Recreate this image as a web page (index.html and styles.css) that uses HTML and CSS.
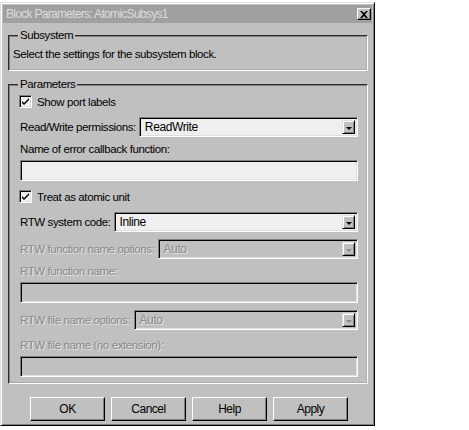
FILE: index.html
```html
<!DOCTYPE html>
<html lang="en">
<head>
    <meta charset="UTF-8">
    <title>Block Parameters: AtomicSubsys1</title>
    <link rel="stylesheet" href="styles.css">
</head>
<body>
    <div class="window">
        <div class="titlebar">
            <span class="title">Block Parameters: AtomicSubsys1</span>
            <span class="close">
                <svg width="8" height="7" viewBox="0 0 8 7"><path d="M0 0h2l2 2 2-2h2L5 3.5 8 7H6L4 5 2 7H0l3-3.5z" fill="#000"/></svg>
            </span>
        </div>

        <div class="client">
            <fieldset class="group subsystem">
                <legend>Subsystem</legend>
                <p class="desc">Select the settings for the subsystem block.</p>
            </fieldset>

            <fieldset class="group params">
                <legend>Parameters</legend>

                <label class="check first">
                    <span class="box"><svg width="9" height="9" viewBox="0 0 9 9"><path d="M1 4l2 2 5-5v2l-5 5-2-2z" fill="#000"/></svg></span>
                    Show port labels
                </label>

                <div class="field-row">
                    <span class="label">Read/Write permissions:</span>
                    <div class="select"><span class="value">ReadWrite</span><span class="arrow"></span></div>
                </div>

                <div class="label line">Name of error callback function:</div>
                <div class="edit"></div>

                <label class="check">
                    <span class="box"><svg width="9" height="9" viewBox="0 0 9 9"><path d="M1 4l2 2 5-5v2l-5 5-2-2z" fill="#000"/></svg></span>
                    Treat as atomic unit
                </label>

                <div class="field-row">
                    <span class="label">RTW system code:</span>
                    <div class="select"><span class="value">Inline</span><span class="arrow"></span></div>
                </div>

                <div class="field-row disabled">
                    <span class="label">RTW function name options:</span>
                    <div class="select"><span class="value">Auto</span><span class="arrow"></span></div>
                </div>

                <div class="label line disabled">RTW function name:</div>
                <div class="edit disabled"></div>

                <div class="field-row disabled">
                    <span class="label">RTW file name options:</span>
                    <div class="select"><span class="value">Auto</span><span class="arrow"></span></div>
                </div>

                <div class="label line late disabled">RTW file name (no extension):</div>
                <div class="edit disabled"></div>
            </fieldset>

            <div class="buttons">
                <button class="btn">OK</button>
                <button class="btn">Cancel</button>
                <button class="btn">Help</button>
                <button class="btn">Apply</button>
            </div>
        </div>
    </div>
</body>
</html>
```

FILE: styles.css
```css
html, body {
    margin: 0;
    background-color: #ffffff;
    font-family: "Liberation Sans", Arial, sans-serif;
    font-size: 11.5px;
    letter-spacing: -0.4px;
}

.window {
    margin-top: 2px;
    width: 375px;
    height: 424px;
    box-sizing: border-box;
    background-color: #c0c0c0;
    border: 1px solid;
    border-color: #dfdfdf #000 #000 #dfdfdf;
    box-shadow: inset 1px 1px 0 #fff, inset -1px -1px 0 #808080;
    padding: 2px;
    display: flex;
    flex-direction: column;
}

.titlebar {
    height: 18px;
    background-color: #a0a0a0;
    color: #dcdcdc;
    display: flex;
    align-items: center;
    justify-content: space-between;
    padding: 0 1px 0 3px;
    font-size: 12px;
    letter-spacing: -0.7px;
}

.close {
    width: 14px;
    height: 12px;
    box-sizing: border-box;
    background-color: #c0c0c0;
    border: 1px solid;
    border-color: #fff #000 #000 #fff;
    box-shadow: inset -1px -1px 0 #808080;
    display: flex;
    align-items: center;
    justify-content: center;
}

.client {
    padding: 0 4px 0 5px;
    display: flex;
    flex-direction: column;
}

.group {
    margin: 0;
    border: 2px groove;
    border-color: #808080 #fff #fff #808080;
}

.group legend {
    padding: 0 2px;
    line-height: 13px;
}

.subsystem {
    margin-top: 6px;
    padding: 6px 3px 8px;
}

.subsystem legend {
    margin-left: 5px;
}

.desc {
    margin: 0;
    line-height: 13px;
}

.params {
    margin-top: 7px;
    padding: 3px 8px 5px 10px;
    display: flex;
    flex-direction: column;
}

.params legend {
    margin-left: -2px;
}

.check {
    display: flex;
    align-items: center;
    height: 15px;
    margin-top: 8px;
    margin-bottom: 1px;
}

.check.first {
    margin-top: 0;
}

.box {
    width: 13px;
    height: 13px;
    box-sizing: border-box;
    margin-left: -1px;
    margin-right: 5px;
    background-color: #f0f0f0;
    border: 1px solid;
    border-color: #808080 #fff #fff #808080;
    box-shadow: inset 1px 1px 0 #000, inset -1px -1px 0 #dfdfdf;
    display: flex;
    align-items: center;
    justify-content: center;
}

.field-row {
    display: flex;
    align-items: center;
    margin-top: 7px;
}

.label {
    white-space: nowrap;
    line-height: 14px;
}

.line {
    margin-top: 5px;
}

.line.late {
    margin-top: 8px;
}

.select, .edit {
    box-sizing: border-box;
    background-color: #efefef;
    border: 1px solid;
    border-color: #808080 #fff #fff #808080;
    box-shadow: inset 1px 1px 0 #000, inset -1px -1px 0 #dfdfdf;
}

.select {
    flex: 1;
    height: 20px;
    margin-left: 3px;
    display: flex;
    align-items: stretch;
    padding: 2px;
}

.select .value {
    flex: 1;
    display: flex;
    align-items: center;
    padding-left: 3px;
    font-size: 12px;
}

.arrow {
    width: 13px;
    box-sizing: border-box;
    background-color: #c0c0c0;
    border: 1px solid;
    border-color: #dfdfdf #000 #000 #dfdfdf;
    box-shadow: inset 1px 1px 0 #fff, inset -1px -1px 0 #808080;
    position: relative;
}

.arrow::after {
    content: "";
    position: absolute;
    left: 3px;
    top: 6px;
    border-left: 3px solid transparent;
    border-right: 3px solid transparent;
    border-top: 3px solid #000;
}

.edit {
    height: 21px;
    margin-top: 4px;
}

.disabled .label, .label.disabled, .disabled .value {
    color: #8a8a8a;
    text-shadow: 1px 1px 0 #e4e4e4;
}

.disabled .select, .edit.disabled {
    background-color: #c0c0c0;
}

.disabled .arrow::after {
    border-top-color: #8a8a8a;
}

.buttons {
    display: flex;
    gap: 6px;
    padding-left: 22px;
    margin-top: 13px;
}

.btn {
    width: 75px;
    height: 24px;
    padding: 0;
    font-family: inherit;
    font-size: 12px;
    letter-spacing: -0.5px;
    color: #000;
    background-color: #c0c0c0;
    border: 1px solid;
    border-color: #fff #000 #000 #fff;
    box-shadow: inset -1px -1px 0 #808080;
}
```
